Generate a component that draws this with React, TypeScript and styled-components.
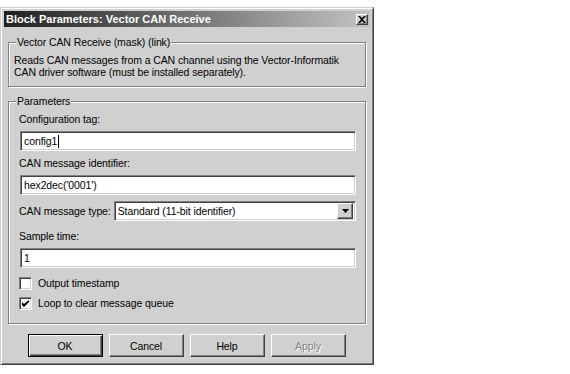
import * as React from "react";
import { FC } from "react";
import styled, { createGlobalStyle, css } from "styled-components";

const FACE = "#d0d0d0";
const SHADOW = "#808080";
const DARK = "#404040";

const GlobalStyle = createGlobalStyle`
  html, body {
    margin: 0;
    padding: 0;
    background: #fff;
  }
  body {
    font-family: "Liberation Sans", Arial, sans-serif;
    font-size: 10.5px;
    letter-spacing: -0.1px;
    color: #000;
  }
`;

const raised = css`
  border: 1px solid;
  border-color: #fff ${DARK} ${DARK} #fff;
  box-shadow: inset -1px -1px 0 ${SHADOW};
`;

const sunken = css`
  border: 1px solid;
  border-color: ${SHADOW} #fff #fff ${SHADOW};
  box-shadow: inset 1px 1px 0 ${DARK}, inset -1px -1px 0 ${FACE};
`;

const Page = styled.div`
  padding-top: 7px;
`;

const Window = styled.div`
  box-sizing: border-box;
  width: 374px;
  height: 358px;
  background: ${FACE};
  border: 1px solid;
  border-color: ${FACE} ${DARK} ${DARK} ${FACE};
  box-shadow: inset 1px 1px 0 #fff, inset -1px -1px 0 ${SHADOW};
  padding: 3px;
  display: flex;
  flex-direction: column;
`;

const TitleBar = styled.div`
  height: 16px;
  display: flex;
  align-items: center;
  justify-content: space-between;
  padding: 0 2px 0 2px;
  background: linear-gradient(to right, #202020, #c3c3c3);
`;

const TitleText = styled.span`
  color: #fff;
  font-weight: bold;
  font-size: 11px;
  letter-spacing: 0;
  line-height: 16px;
  white-space: nowrap;
`;

const CloseButton = styled.div`
  box-sizing: border-box;
  width: 12px;
  height: 11px;
  background: ${FACE};
  ${raised};
  display: flex;
  align-items: center;
  justify-content: center;
`;

const Body = styled.div`
  flex: 1;
  display: flex;
  flex-direction: column;
  padding: 9px 4px 0 4px;
`;

const Group = styled.fieldset<{ $top?: number }>`
  margin: ${(p) => p.$top ?? 0}px 0 0 0;
  padding: 0;
  min-inline-size: 0;
  border: 1px solid ${SHADOW};
  box-shadow: inset 1px 1px 0 #fff, 1px 1px 0 #fff;
`;

const Legend = styled.legend`
  padding: 0 1px;
  margin-left: 7px;
  line-height: 13px;
  background: ${FACE};
`;

const Description = styled.div`
  padding: 5px 6px 8px 5px;
  line-height: 12px;
  white-space: nowrap;
`;

const ParamsBody = styled.div`
  display: flex;
  flex-direction: column;
  padding: 5px 9px 13px 10px;
`;

const Label = styled.div<{ $top?: number }>`
  line-height: 13px;
  margin-top: ${(p) => p.$top ?? 0}px;
  white-space: nowrap;
`;

const TextBox = styled.div<{ $top?: number }>`
  box-sizing: border-box;
  height: 20px;
  margin-top: ${(p) => p.$top ?? 0}px;
  margin-left: 1px;
  background: #fff;
  ${sunken};
  padding: 0 3px;
  display: flex;
  align-items: center;
  line-height: 13px;
`;

const Caret = styled.span`
  display: inline-block;
  width: 1px;
  height: 13px;
  background: #000;
  margin-left: 1px;
`;

const SelectRow = styled.div<{ $top?: number }>`
  display: flex;
  align-items: center;
  margin-top: ${(p) => p.$top ?? 0}px;
  gap: 3px;
`;

const Select = styled.div`
  box-sizing: border-box;
  flex: 1;
  height: 20px;
  background: #fff;
  ${sunken};
  display: flex;
  align-items: center;
  padding: 2px 2px 2px 3px;
`;

const SelectValue = styled.span`
  flex: 1;
  line-height: 13px;
`;

const ArrowButton = styled.div`
  box-sizing: border-box;
  width: 16px;
  height: 16px;
  background: ${FACE};
  ${raised};
  display: flex;
  align-items: center;
  justify-content: center;
`;

const CheckRow = styled.div<{ $top?: number }>`
  display: flex;
  align-items: center;
  gap: 6px;
  margin-top: ${(p) => p.$top ?? 0}px;
  line-height: 13px;
`;

const CheckBox = styled.div`
  box-sizing: border-box;
  width: 13px;
  height: 13px;
  background: #fff;
  ${sunken};
  display: flex;
  align-items: center;
  justify-content: center;
`;

const ButtonRow = styled.div`
  display: flex;
  justify-content: center;
  gap: 6px;
  margin-top: 10px;
  padding-right: 1px;
`;

const Button = styled.div<{ $default?: boolean; $disabled?: boolean }>`
  box-sizing: border-box;
  width: 75px;
  height: 23px;
  background: ${FACE};
  display: flex;
  align-items: center;
  justify-content: center;
  ${(p) =>
    p.$default
      ? css`
          border: 1px solid #000;
          box-shadow: inset 1px 1px 0 #fff, inset -1px -1px 0 ${DARK},
            inset -2px -2px 0 ${SHADOW};
        `
      : raised};
  ${(p) =>
    p.$disabled &&
    css`
      color: ${SHADOW};
      text-shadow: 1px 1px 0 #fff;
    `};
`;

const CloseIcon: FC = () => (
  <svg width="8" height="7" viewBox="0 0 8 7">
    <path d="M0 0h2l2 2 2-2h2L5 3.5 8 7H6L4 5 2 7H0l3-3.5z" fill="#000" />
  </svg>
);

const ArrowIcon: FC = () => (
  <svg width="7" height="4" viewBox="0 0 7 4">
    <path d="M0 0h7L3.5 4z" fill="#000" />
  </svg>
);

const CheckIcon: FC = () => (
  <svg width="7" height="7" viewBox="0 0 7 7">
    <path d="M0 2v3l2 2 5-5V-0L2 4z" fill="#000" />
  </svg>
);

const App: FC = () => {
  return (
    <>
      <GlobalStyle />
      <Page>
        <Window>
          <TitleBar>
            <TitleText>Block Parameters: Vector CAN Receive</TitleText>
            <CloseButton>
              <CloseIcon />
            </CloseButton>
          </TitleBar>
          <Body>
            <Group>
              <Legend>Vector CAN Receive (mask) (link)</Legend>
              <Description>
                Reads CAN messages from a CAN channel using the Vector-Informatik
                <br />
                CAN driver software (must be installed separately).
              </Description>
            </Group>
            <Group $top={8}>
              <Legend>Parameters</Legend>
              <ParamsBody>
                <Label $top={0}>Configuration tag:</Label>
                <TextBox $top={5}>
                  config1
                  <Caret />
                </TextBox>
                <Label $top={6}>CAN message identifier:</Label>
                <TextBox $top={5}>hex2dec('0001')</TextBox>
                <SelectRow $top={6}>
                  <Label>CAN message type:</Label>
                  <Select>
                    <SelectValue>Standard (11-bit identifier)</SelectValue>
                    <ArrowButton>
                      <ArrowIcon />
                    </ArrowButton>
                  </Select>
                </SelectRow>
                <Label $top={9}>Sample time:</Label>
                <TextBox $top={5}>1</TextBox>
                <CheckRow $top={9}>
                  <CheckBox />
                  <span>Output timestamp</span>
                </CheckRow>
                <CheckRow $top={7}>
                  <CheckBox>
                    <CheckIcon />
                  </CheckBox>
                  <span>Loop to clear message queue</span>
                </CheckRow>
              </ParamsBody>
            </Group>
            <ButtonRow>
              <Button $default>OK</Button>
              <Button>Cancel</Button>
              <Button>Help</Button>
              <Button $disabled>Apply</Button>
            </ButtonRow>
          </Body>
        </Window>
      </Page>
    </>
  );
};

export default App;
